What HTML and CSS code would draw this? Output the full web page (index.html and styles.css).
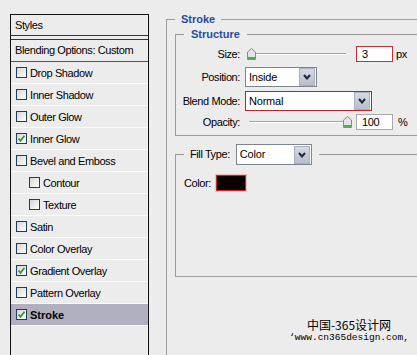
FILE: index.html
```html
<!DOCTYPE html>
<html lang="en">
<head>
    <meta charset="UTF-8">
    <meta name="viewport" content="width=device-width, initial-scale=1.0">
    <title>Layer Style - Stroke</title>
    <link rel="stylesheet" href="styles.css">
</head>
<body>
    <div class="window">
        <div class="styles-list">
            <div class="list-head">Styles</div>
            <div class="list-blend">Blending Options: Custom</div>
            <div class="list-item"><span class="check"></span>Drop Shadow</div>
            <div class="list-item"><span class="check"></span>Inner Shadow</div>
            <div class="list-item"><span class="check"></span>Outer Glow</div>
            <div class="list-item"><span class="check on"><svg width="9" height="9" viewBox="0 0 9 9"><path d="M1.5 4.5 L3.5 6.8 L7.5 1.8" fill="none" stroke="#2e9b2e" stroke-width="1.8"/></svg></span>Inner Glow</div>
            <div class="list-item"><span class="check"></span>Bevel and Emboss</div>
            <div class="list-item sub"><span class="check"></span>Contour</div>
            <div class="list-item sub"><span class="check"></span>Texture</div>
            <div class="list-item"><span class="check"></span>Satin</div>
            <div class="list-item"><span class="check"></span>Color Overlay</div>
            <div class="list-item"><span class="check on"><svg width="9" height="9" viewBox="0 0 9 9"><path d="M1.5 4.5 L3.5 6.8 L7.5 1.8" fill="none" stroke="#2e9b2e" stroke-width="1.8"/></svg></span>Gradient Overlay</div>
            <div class="list-item"><span class="check"></span>Pattern Overlay</div>
            <div class="list-item selected"><span class="check on"><svg width="9" height="9" viewBox="0 0 9 9"><path d="M1.5 4.5 L3.5 6.8 L7.5 1.8" fill="none" stroke="#2e9b2e" stroke-width="1.8"/></svg></span>Stroke</div>
        </div>

        <div class="options">
            <fieldset class="group stroke">
                <legend>Stroke</legend>

                <fieldset class="group structure">
                    <legend>Structure</legend>

                    <div class="row row-size">
                        <span class="label">Size:</span>
                        <div class="slider">
                            <svg class="thumb" width="9" height="12" viewBox="0 0 9 12"><path d="M0.5 11.5 V4 L4.5 0.5 L8.5 4 V11.5 Z" fill="#e4e4e4" stroke="#8a8a8a"/><rect x="1" y="9" width="7" height="2.5" fill="#4caf50"/></svg>
                            <span class="track track-right"></span>
                        </div>
                        <span class="field error">3</span>
                        <span class="unit">px</span>
                    </div>

                    <div class="row row-position">
                        <span class="label">Position:</span>
                        <div class="select select-position">
                            <span class="select-text">Inside</span>
                            <span class="arrow"><svg width="8" height="6" viewBox="0 0 8 6"><path d="M1 1 L4 4.5 L7 1" fill="none" stroke="#1b2a3c" stroke-width="2"/></svg></span>
                        </div>
                    </div>

                    <div class="row row-blend">
                        <span class="label">Blend Mode:</span>
                        <div class="select select-blend error">
                            <span class="select-text">Normal</span>
                            <span class="arrow"><svg width="8" height="6" viewBox="0 0 8 6"><path d="M1 1 L4 4.5 L7 1" fill="none" stroke="#1b2a3c" stroke-width="2"/></svg></span>
                        </div>
                    </div>

                    <div class="row row-opacity">
                        <span class="label">Opacity:</span>
                        <div class="slider">
                            <span class="track track-left"></span>
                            <svg class="thumb" width="9" height="12" viewBox="0 0 9 12"><path d="M0.5 11.5 V4 L4.5 0.5 L8.5 4 V11.5 Z" fill="#e4e4e4" stroke="#8a8a8a"/><rect x="1" y="9" width="7" height="2.5" fill="#4caf50"/></svg>
                        </div>
                        <span class="field">100</span>
                        <span class="unit unit-pct">%</span>
                    </div>
                </fieldset>

                <fieldset class="group fill">
                    <legend>
                        <span class="fill-label">Fill Type:</span>
                        <span class="select select-fill">
                            <span class="select-text">Color</span>
                            <span class="arrow"><svg width="8" height="6" viewBox="0 0 8 6"><path d="M1 1 L4 4.5 L7 1" fill="none" stroke="#1b2a3c" stroke-width="2"/></svg></span>
                        </span>
                    </legend>
                    <div class="color-row">
                        <span>Color:</span>
                        <span class="swatch"></span>
                    </div>
                </fieldset>

                <div class="watermark">
                    <div class="wm-cn">中国-365设计网</div>
                    <div class="wm-url">‘www.cn365design.com,</div>
                </div>
            </fieldset>
        </div>
    </div>
</body>
</html>
```

FILE: styles.css
```css
body {
    margin: 0;
    background: #ececec;
    font-family: "Liberation Sans", Arial, sans-serif;
    font-size: 11px;
    letter-spacing: -0.4px;
    color: #000;
    overflow: hidden;
}
.window {
    display: flex;
    align-items: flex-start;
    height: 355px;
}

/* left list of effects */
.styles-list {
    margin: 14px 0 0 10px;
    width: 137px;
    height: 360px;
    border: 1px solid #111;
    background: #ececec;
    flex-shrink: 0;
}
.list-head {
    height: 20px;
    line-height: 20px;
    padding-left: 4px;
    border-bottom: 1px solid #333;
}
.list-blend {
    margin-top: 3px;
    height: 21px;
    line-height: 20px;
    padding-left: 4px;
    border-top: 1px solid #333;
    border-bottom: 1px solid #555;
}
.list-item {
    display: flex;
    align-items: center;
    height: 21px;
    padding-left: 5px;
    border-bottom: 1px solid #fbfbfb;
}
.list-item.sub {
    padding-left: 18px;
}
.list-item.selected {
    background: #b0b0c0;
    font-weight: bold;
    letter-spacing: 0;
}
.check {
    display: flex;
    align-items: center;
    justify-content: center;
    width: 11px;
    height: 11px;
    box-sizing: border-box;
    margin-right: 3px;
    border: 1px solid #1d3c5e;
    background: linear-gradient(135deg, #d6d6d2, #ffffff);
}

/* right side */
.options {
    margin-left: 17px;
    width: 420px;
    flex-shrink: 0;
}
fieldset {
    margin: 0;
    padding: 0;
    border: none;
    min-width: 0;
}
.group {
    border-top: 1px solid #9c9c9c;
    border-left: 1px solid #9c9c9c;
}
.group > legend {
    margin-left: 8px;
    padding: 0 6px;
    line-height: 13px;
    font-weight: bold;
    letter-spacing: 0;
    color: #1f4f9f;
}
.stroke {
    margin-top: 13px;
    height: 400px;
}
.structure {
    margin: 2px 0 0 8px;
    padding-bottom: 5px;
    border-bottom: 1px solid #9c9c9c;
}
.structure > legend {
    padding: 0 7px;
}

.row {
    display: flex;
    align-items: center;
}
.label {
    width: 64px;
    margin-right: 5px;
    text-align: right;
}
.row-size {
    height: 16px;
    margin-top: 5px;
}
.row-position {
    height: 20px;
    margin-top: 5px;
}
.row-blend {
    height: 20px;
    margin-top: 4px;
}
.row-opacity {
    height: 16px;
    margin-top: 3px;
}

.slider {
    display: flex;
    align-items: center;
    width: 105px;
    margin-left: 2px;
}
.track {
    flex: 1;
    height: 0;
    border-top: 1px solid #a4a4a4;
    border-bottom: 1px solid #ffffff;
}
.track-right {
    margin-right: 6px;
}
.track-left {
    margin-left: 2px;
}
.thumb {
    display: block;
    flex-shrink: 0;
}
.field {
    width: 37px;
    height: 16px;
    box-sizing: border-box;
    margin-left: 4px;
    padding-left: 5px;
    line-height: 14px;
    border: 1px solid #a9a9a9;
    background: #fff;
}
.field.error {
    border-color: #c0303a;
}
.unit {
    margin-left: 3px;
}
.unit-pct {
    margin-left: 5px;
}

.select {
    display: flex;
    align-items: center;
    height: 20px;
    box-sizing: border-box;
    border: 1px solid #7d8591;
    background: #fff;
}
.select.error {
    border-color: #b8232f;
}
.select-text {
    flex: 1;
    padding-left: 3px;
    font-weight: normal;
    letter-spacing: -0.2px;
    color: #000;
}
.arrow {
    display: flex;
    align-items: center;
    justify-content: center;
    width: 14px;
    height: 16px;
    margin-right: 1px;
    border: 1px solid #a9afbf;
    background: linear-gradient(#d7dae4, #b9bdcc);
}
.select-position {
    width: 72px;
}
.select-blend {
    width: 127px;
}

.fill {
    margin: 8px 0 0 8px;
    padding-bottom: 85px;
    border-bottom: 1px solid #9c9c9c;
}
.fill > legend {
    display: flex;
    align-items: center;
    padding: 0 7px 0 6px;
}
.fill-label {
    margin-right: 6px;
    font-weight: normal;
    letter-spacing: -0.4px;
    color: #000;
}
.select-fill {
    width: 76px;
    height: 21px;
}
.color-row {
    display: flex;
    align-items: center;
    margin-top: 10px;
    padding-left: 8px;
}
.swatch {
    width: 30px;
    height: 16px;
    box-sizing: border-box;
    margin-left: 5px;
    background: #0a0000;
    border: 1px solid #c02828;
    box-shadow: 0 0 0 1px #f0c0c0;
}

.watermark {
    width: 120px;
    margin: 41px 0 0 122px;
    text-align: center;
    letter-spacing: 0;
}
.wm-cn {
    font-family: "Noto Sans CJK SC", sans-serif;
    font-size: 12px;
    line-height: 13px;
}
.wm-url {
    margin-top: 1px;
    font-family: "Liberation Mono", monospace;
    font-size: 9.5px;
    line-height: 11px;
    white-space: nowrap;
}
```
